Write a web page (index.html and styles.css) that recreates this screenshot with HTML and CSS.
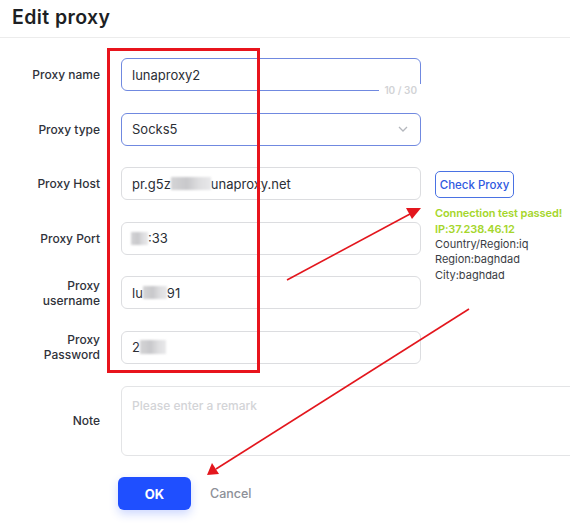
FILE: index.html
```html
<!DOCTYPE html>
<html>
<head>
<meta charset="utf-8">
<link rel="stylesheet" href="styles.css">
</head>
<body>
<div class="dialog">
  <header class="head"><h1 class="title">Edit proxy</h1></header>
  <form class="form">
    <label class="lbl">Proxy name</label>
    <div class="field focus">
      <span class="val">lunaproxy2</span>
      <span class="count">10 / 30</span>
    </div>

    <label class="lbl">Proxy type</label>
    <div class="field focus select">
      <span class="val">Socks5</span>
      <svg class="chev" width="10" height="6" viewBox="0 0 10 6"><path d="M1 1l4 4 4-4" fill="none" stroke="#b4b7bd" stroke-width="1.3"/></svg>
    </div>

    <label class="lbl">Proxy Host</label>
    <div class="field"><span class="val">pr.g5z<span class="blur b-host"></span>unaproxy.net</span></div>

    <div class="side">
      <button type="button" class="check">Check Proxy</button>
      <div class="info">
        <div class="ok-line">Connection test passed!</div>
        <div class="ok-line">IP:37.238.46.12</div>
        <div>Country/Region:iq</div>
        <div>Region:baghdad</div>
        <div>City:baghdad</div>
      </div>
    </div>

    <label class="lbl">Proxy Port</label>
    <div class="field"><span class="val"><span class="blur b-port"></span>:33</span></div>

    <label class="lbl">Proxy username</label>
    <div class="field"><span class="val">lu<span class="blur b-user"></span>91</span></div>

    <label class="lbl">Proxy Password</label>
    <div class="field"><span class="val">2<span class="blur b-pass"></span></span></div>

    <label class="lbl note-lbl">Note</label>
    <div class="note"><span class="ph">Please enter a remark</span></div>

    <div class="actions">
      <button type="button" class="btn-ok">OK</button>
      <button type="button" class="btn-cancel">Cancel</button>
    </div>
  </form>

  <div class="redbox"></div>
  <svg class="arrows" width="570" height="530" viewBox="0 0 570 530">
    <line x1="287" y1="280" x2="410" y2="214" stroke="#e3161d" stroke-width="1.6"/>
    <polygon points="421,208 406,208 412,219" fill="#e3161d"/>
    <line x1="469" y1="309" x2="216" y2="469" stroke="#e3161d" stroke-width="1.6"/>
    <polygon points="207,475 212,463 219,474" fill="#e3161d"/>
  </svg>
</div>
</body>
</html>
```

FILE: styles.css
```css
html, body {
  margin: 0;
  padding: 0;
  background: #fff;
  overflow: hidden;
}
body {
  width: 570px;
  height: 530px;
  font-family: "Inter", "Noto Sans", "Liberation Sans", sans-serif;
  color: #2d3038;
}
.dialog {
  position: relative;
  width: 570px;
  height: 530px;
}
.head {
  height: 38px;
  border-bottom: 1px solid #ececec;
  display: flex;
  align-items: center;
  padding: 0 12px 4px;
  box-sizing: border-box;
}
.title {
  margin: 0;
  font-size: 19.5px;
  font-weight: 600;
  color: #1d1f24;
  letter-spacing: 0.4px;
}
.form {
  display: grid;
  grid-template-columns: 121px 300px 1fr;
  grid-template-rows: repeat(6, 33px) 70px 33px;
  row-gap: 21.6px;
  padding-top: 20px;
}
.lbl {
  grid-column: 1;
  align-self: center;
  text-align: right;
  padding: 0 21px 0 18px;
  font-size: 12px;
  font-weight: 500;
  line-height: 15px;
  color: #2f323a;
}
.field {
  grid-column: 2;
  position: relative;
  border: 1px solid #dcdde0;
  border-radius: 6px;
  display: flex;
  align-items: center;
  padding: 0 10px;
  box-sizing: border-box;
  height: 33px;
}
.field.focus {
  border-color: #7089e0;
}
.val {
  font-size: 13px;
  color: #2b2e35;
  display: inline-flex;
  align-items: center;
}
.count {
  position: absolute;
  right: -2px;
  bottom: -6px;
  background: #fff;
  padding: 0 5px;
  font-size: 10px;
  font-weight: 600;
  color: #d2d3d6;
  line-height: 12px;
}
.select {
  justify-content: space-between;
}
.chev {
  margin-right: 2px;
}
.blur {
  display: inline-block;
  height: 13px;
  background: linear-gradient(90deg, #d4d4d6, #c8c8cb 40%, #dedee0 70%, #e8e8ea);
  filter: blur(1px);
}
.b-host { width: 40px; }
.b-port { width: 17px; margin-left: -1px; }
.b-user { width: 24px; }
.b-pass { width: 26px; height: 14px; }
.side {
  grid-column: 3;
  grid-row: 3 / span 4;
  align-self: start;
  padding-left: 14px;
}
.check {
  margin-top: 4px;
  height: 27px;
  width: 79px;
  border: 1px solid #4a72e3;
  border-radius: 5px;
  background: #fff;
  color: #2f5ae0;
  font-family: inherit;
  font-size: 11.5px;
  font-weight: 500;
  padding: 0;
}
.info {
  margin-top: 8px;
  font-size: 11px;
  line-height: 15.4px;
  color: #3a3d44;
  font-weight: 400;
}
.ok-line {
  color: #a5d62b;
  font-weight: 600;
  letter-spacing: -0.1px;
}
.note-lbl {
  grid-row: 7;
}
.note {
  grid-column: 2 / span 2;
  grid-row: 7;
  height: 70px;
  width: 470px;
  border: 1px solid #e3e4e6;
  border-radius: 6px;
  box-sizing: border-box;
  padding: 7px 10px;
}
.ph {
  font-size: 12px;
  font-weight: 500;
  color: #d3d4d7;
}
.actions {
  grid-column: 2 / span 2;
  grid-row: 8;
  display: flex;
  align-items: center;
  margin-left: -3px;
}
.btn-ok {
  width: 73px;
  height: 33px;
  border: none;
  border-radius: 6px;
  background: #1f4fff;
  color: #fff;
  font-family: inherit;
  font-weight: 700;
  font-size: 13px;
  box-shadow: 0 4px 10px rgba(31, 79, 255, 0.22);
}
.btn-cancel {
  margin-left: 13px;
  border: none;
  background: none;
  color: #8d9098;
  font-family: inherit;
  font-size: 12.5px;
  font-weight: 500;
}
.redbox {
  position: absolute;
  left: 107px;
  top: 48px;
  width: 153px;
  height: 325px;
  border: 3.5px solid #e8141c;
  box-sizing: border-box;
}
.arrows {
  position: absolute;
  left: 0;
  top: 0;
  pointer-events: none;
}
```
